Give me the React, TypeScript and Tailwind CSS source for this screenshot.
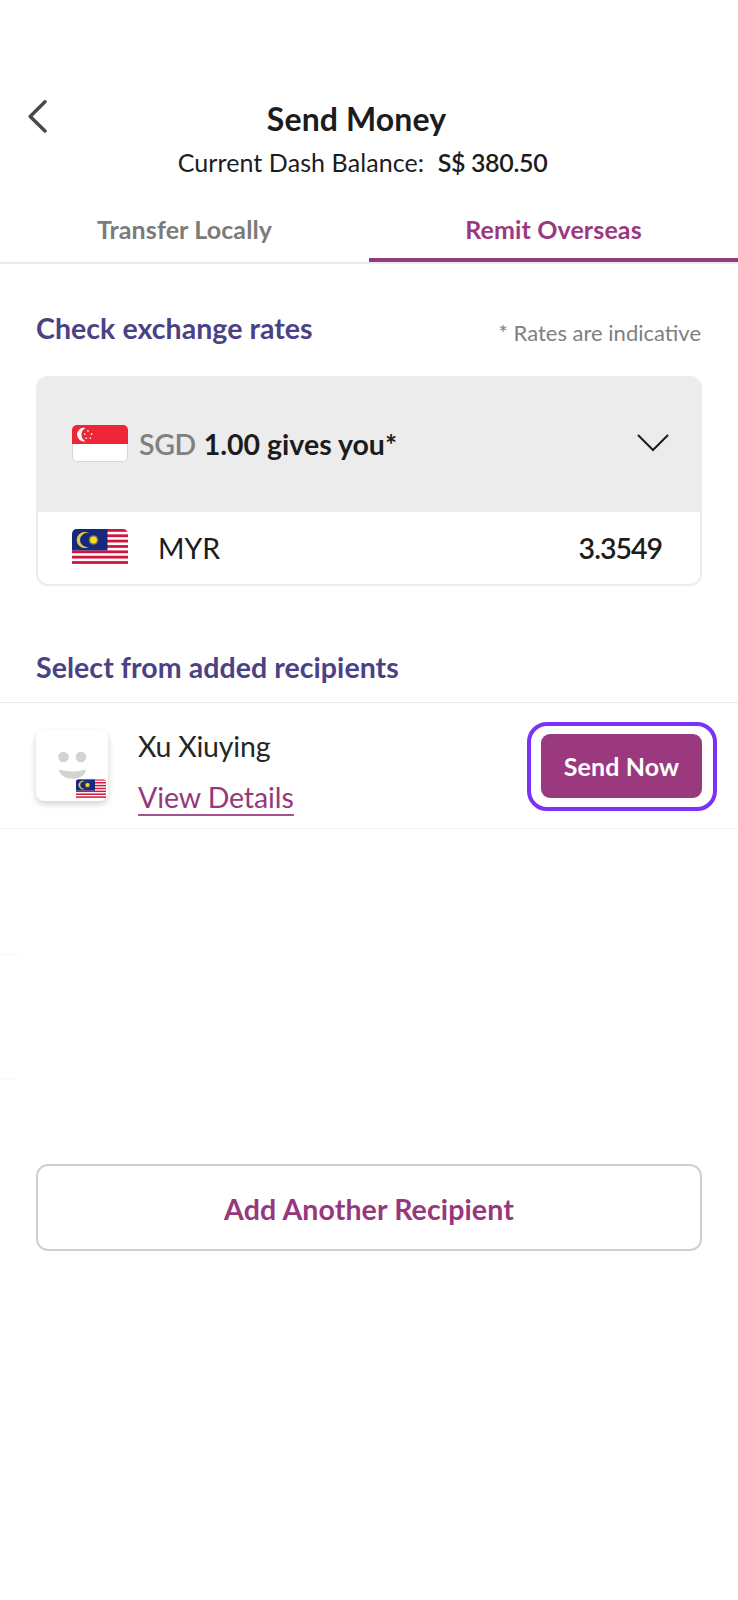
import type { ReactNode } from "react";

function SingaporeFlag({ className }: { className?: string }) {
  return (
    <svg viewBox="0 0 56 37" className={className} aria-label="Singapore">
      <rect x="0.5" y="0.5" width="55" height="36" rx="4.5" fill="#fff" stroke="#d6d6d6" />
      <path d="M0 19V5a5 5 0 0 1 5-5h46a5 5 0 0 1 5 5v14z" fill="#ee2536" />
      <path d="M13.5 3a6.8 6.8 0 1 0 0 13.2A7.4 7.4 0 0 1 13.5 3z" fill="#fff" />
      <g fill="#fff" opacity="0.8">
        <circle cx="16" cy="6" r="0.9" />
        <circle cx="12.8" cy="9.2" r="0.9" />
        <circle cx="19.6" cy="9" r="0.9" />
        <circle cx="14.2" cy="13.2" r="0.9" />
        <circle cx="18.4" cy="13.200" r="0.9" />
      </g>
    </svg>
  );
}

function MalaysiaFlag({ className }: { className?: string }) {
  return (
    <svg viewBox="0 0 56 35" className={className} aria-label="Malaysia">
      <clipPath id="my-flag">
        <path d="M0 35V5a5 5 0 0 1 5-5h46a5 5 0 0 1 5 5v30z" />
      </clipPath>
      <g clipPath="url(#my-flag)">
        <rect width="56" height="35" fill="#fff" />
        {[0, 1, 2, 3, 4, 5, 6].map((i) => (
          <rect key={i} y={i * 5.35} width="56" height="2.8" fill="#d0153f" />
        ))}
        <rect width="35.5" height="21.4" fill="#17297c" />
        <path d="M17 4.300a8 8 0 1 0 0 13.400A7 7 0 1 1 17 4.300z" fill="#d8c948" />
        <circle cx="21.500" cy="11" r="4.800" fill="#b9a93a" opacity="0.6" />
        <circle cx="21.500" cy="11" r="3.400" fill="#fbe00f" />
      </g>
    </svg>
  );
}

function SectionTitle({ children }: { children: ReactNode }) {
  return <h2 className="text-[28.5px] leading-9 font-bold tracking-[0.06px] text-[#4b4285]">{children}</h2>;
}

function Header() {
  return (
    <header className="flex h-[206px] pt-[99px] pr-14 pl-7">
      <button aria-label="Back" className="h-9 w-5">
        <svg viewBox="0 0 20 36" fill="none" stroke="#484848" strokeWidth="3.4" strokeLinecap="round" strokeLinejoin="round">
          <path d="M17 2.8 2.2 17.5 17 32" />
        </svg>
      </button>
      <div className="flex-1 text-center text-[#1c1c1c]">
        <h1 className="-ml-[17px] text-[32px] leading-10 font-bold tracking-[0.1px]">Send Money</h1>
        <p className="mt-[7px] -ml-[5px] text-[25px] leading-8 tracking-[0.09px]">
          Current Dash Balance: <span className="ml-[7px] font-semibold tracking-[-0.35px]">S$ 380.50</span>
        </p>
      </div>
    </header>
  );
}

function Tabs() {
  return (
    <nav className="flex h-[58px] border-b-2 border-[#ebebeb] text-center text-[25px] leading-[46px] font-bold tracking-[0.12px]">
      <button className="flex h-full flex-1 justify-center border-b-4 border-transparent text-[#7b7b7b]">Transfer Locally</button>
      <button className="flex h-full flex-1 justify-center border-b-4 border-[#913b7d] text-[#9b397f]">Remit Overseas</button>
    </nav>
  );
}

function ExchangeRates() {
  return (
    <section className="px-9 pt-[46px]">
      <div className="flex items-start justify-between">
        <SectionTitle>Check exchange rates</SectionTitle>
        <span className="pt-[7px] pr-px text-[22px] leading-8 text-[#808080]">* Rates are indicative</span>
      </div>
      <div className="mt-[27px] h-[210px] overflow-hidden rounded-xl border-2 border-[#ececec]">
        <div className="h-[134px] bg-[#ececec] pr-[31px] pl-[34px]">
          <div className="flex h-[130px] items-center text-[28.5px]">
            <SingaporeFlag className="h-[37px] w-14 shrink-0" />
            <span className="mt-[3px] ml-[11px] font-semibold tracking-[-0.4px] text-[#808080]">SGD</span>
            <span className="mt-[3px] ml-2 font-bold text-[#1c1c1c]">1.00 gives you*</span>
            <svg viewBox="0 0 32 18" fill="none" stroke="#1c1c1c" strokeWidth="2" strokeLinecap="round" className="ml-auto h-[18px] w-8">
              <path d="M1.5 1.5 16 16 30.500 1.500" />
            </svg>
          </div>
        </div>
        <div className="flex h-[72px] items-center pr-[38px] pl-[34px] text-[28.5px] text-[#1c1c1c]">
          <MalaysiaFlag className="-mt-1 h-[35px] w-14 shrink-0" />
          <span className="mt-px ml-[30px]">MYR</span>
          <span className="mt-px ml-auto font-semibold tracking-[-1px]">3.3549</span>
        </div>
      </div>
    </section>
  );
}

function Avatar() {
  return (
    <div className="relative h-[71px] w-[72px] rounded-lg bg-white shadow-[0_3px_6px_rgba(0,0,0,0.18)]">
      <svg viewBox="0 0 72 72" fill="#d3d3d3">
        <circle cx="27.500" cy="27" r="5.300" />
        <circle cx="45" cy="27" r="5.300" />
        <path d="M23 39.500q13.500 4 27 0c-1 6-6 9.300-13.500 9.300S23.500 45 23 39.500z" />
      </svg>
      <MalaysiaFlag className="absolute top-[49px] left-10 h-[19px] w-[30px]" />
    </div>
  );
}

function Recipients() {
  return (
    <section className="pt-[63px]">
      <div className="h-[53px] px-9">
        <SectionTitle>Select from added recipients</SectionTitle>
      </div>
      <div className="flex h-[127px] border-t border-b border-t-[#ebebeb] border-b-[#f2f2f2] pt-[19px] pr-[21px] pl-9">
        <div className="pt-2">
          <Avatar />
        </div>
        <div className="ml-[30px] flex flex-col items-start pt-1.5 text-[28.5px]">
          <span className="leading-9 tracking-[-0.2px] text-[#262626]">Xu Xiuying</span>
          <a href="#details" className="mt-4 h-9 border-b-2 border-[#a65290] leading-[35px] tracking-[-0.1px] text-[#96397c]">
            View Details
          </a>
        </div>
        <div className="ml-auto h-[89px] w-[190px] rounded-[20px] border-4 border-[#7a33f6] px-2.5 pt-2">
          <button className="h-16 w-[161px] rounded-[9px] bg-[#9b397f] pt-0.5 text-[25px] font-bold tracking-[0.15px] text-white">
            Send Now
          </button>
        </div>
      </div>
      <div className="mt-[125px] h-px w-5 bg-[#f7f7f7]" />
      <div className="mt-[124px] h-px w-5 bg-[#fafafa]" />
    </section>
  );
}

export default function App() {
  return (
    <div className="h-[1600px] w-[738px] bg-white font-['Lato',sans-serif]">
      <Header />
      <Tabs />
      <main>
        <ExchangeRates />
        <Recipients />
        <div className="px-9 pt-[84px]">
          <button className="h-[87px] w-full rounded-xl border-2 border-[#d0d0d0] pt-[3px] text-[28.5px] font-bold tracking-[0.12px] text-[#96397c]">
            Add Another Recipient
          </button>
        </div>
      </main>
    </div>
  );
}
